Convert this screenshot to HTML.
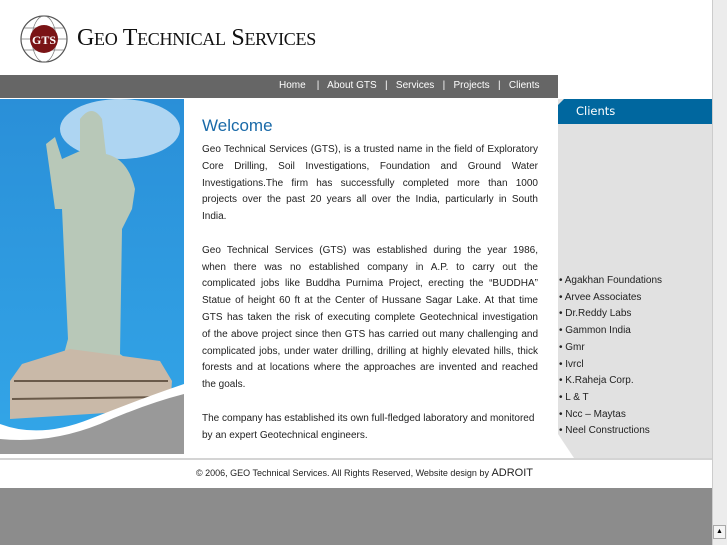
<!DOCTYPE html>
<html><head><meta charset="utf-8"><style>
body{margin:0;width:727px;height:545px;overflow:hidden;background:#fff;font-family:"Liberation Sans",sans-serif;position:relative}
.a{position:absolute}
.t div{white-space:nowrap;text-align:justify;text-align-last:justify;height:16.8px}
.t div.l{text-align-last:left}
.t .g{height:16.8px}
</style></head><body>
<div class="a" style="left:712px;top:0;width:15px;height:545px;background:#ececec;border-left:1px solid #ccc"></div>
<div class="a" style="left:713px;top:525px;width:13px;height:14px;background:#f4f4f4;border:1px solid #aaa;box-sizing:border-box;font-size:7px;text-align:center;line-height:12px">▲</div>
<svg class="a" style="left:19px;top:14px" width="50" height="50" viewBox="0 0 50 50">
<circle cx="25" cy="25" r="23" fill="#fff" stroke="#555" stroke-width="1.2"/>
<ellipse cx="25" cy="25" rx="12" ry="23" fill="none" stroke="#777" stroke-width=".7"/>
<line x1="2" y1="25" x2="48" y2="25" stroke="#777" stroke-width=".7"/>
<line x1="5" y1="14" x2="45" y2="14" stroke="#777" stroke-width=".7"/>
<line x1="5" y1="36" x2="45" y2="36" stroke="#777" stroke-width=".7"/>
<circle cx="25" cy="25" r="14" fill="#7a1416"/>
<text x="25" y="30" font-size="12" font-family="Liberation Serif" fill="#fff" text-anchor="middle" font-weight="bold">GTS</text>
</svg>
<div class="a" style="left:77px;top:25px;font-family:'Liberation Serif',serif;font-size:24px;color:#111;letter-spacing:-0.3px;white-space:nowrap">G<span style="font-size:18px">EO</span> T<span style="font-size:18px">ECHNICAL</span> S<span style="font-size:18px">ERVICES</span></div>
<div class="a" style="left:0;top:75px;width:558px;height:23px;background:#666"></div>
<div class="a" style="left:279px;top:80px;color:#fff;font-size:10px;white-space:nowrap">Home&nbsp;&nbsp;&nbsp; |&nbsp;&nbsp; About GTS&nbsp;&nbsp; |&nbsp;&nbsp; Services&nbsp;&nbsp; |&nbsp;&nbsp; Projects&nbsp;&nbsp; |&nbsp;&nbsp; Clients</div>
<svg class="a" style="left:0;top:99px" width="184" height="355">
<defs><linearGradient id="s" x1="0" y1="0" x2="0" y2="1"><stop offset="0" stop-color="#2a8fd8"/><stop offset="1" stop-color="#33a6e8"/></linearGradient></defs>
<rect width="184" height="355" fill="url(#s)"/>
<ellipse cx="120" cy="30" rx="60" ry="30" fill="#cfe6f7" opacity=".8"/>
<path d="M80 20 Q92 4 102 20 L106 55 Q128 60 135 90 L132 110 L122 130 L120 255 L130 262 L62 262 L68 240 L62 110 L55 110 L46 45 L55 38 L62 60 L80 52 Z" fill="#b8c8b8"/>
<path d="M70 250 L160 262 L172 282 L170 310 L10 320 L10 282 L22 265 Z" fill="#c9b9a8"/>
<path d="M14 282 L168 282 M12 300 L168 298" stroke="#6a5a4a" stroke-width="2"/>
<path d="M0 325 Q40 340 90 320 Q140 300 184 285 L184 355 L0 355 Z" fill="#fff"/>
<path d="M0 340 Q50 345 100 325 Q145 305 184 295 L184 355 L0 355 Z" fill="#999"/>
</svg>
<div class="a" style="left:202px;top:116px;color:#1a6aa8;font-size:17px">Welcome</div>
<div class="a t" style="left:202px;top:142px;width:336px;font-size:10px;line-height:16.8px;color:#222">
<div>Geo Technical Services (GTS), is a trusted name in the field of Exploratory</div>
<div>Core Drilling, Soil Investigations, Foundation and Ground Water</div>
<div>Investigations.The firm has successfully completed more than 1000</div>
<div>projects over the past 20 years all over the India, particularly in South</div>
<div class="l">India.</div>
<div class="g"></div>
<div>Geo Technical Services (GTS) was established during the year 1986,</div>
<div>when there was no established company in A.P. to carry out the</div>
<div>complicated jobs like Buddha Purnima Project, erecting the “BUDDHA”</div>
<div>Statue of height 60 ft at the Center of Hussane Sagar Lake. At that time</div>
<div>GTS has taken the risk of executing complete Geotechnical investigation</div>
<div>of the above project since then GTS has carried out many challenging and</div>
<div>complicated jobs, under water drilling, drilling at highly elevated hills, thick</div>
<div>forests and at locations where the approaches are invented and reached</div>
<div class="l">the goals.</div>
<div class="g"></div>
<div class="l">The company has established its own full-fledged laboratory and monitored</div>
<div class="l">by an expert Geotechnical engineers.</div>
</div>
<div class="a" style="left:558px;top:99px;width:154px;height:359px;background:#e1e1e1;clip-path:polygon(0 0,100% 0,100% 100%,16px 100%,0 335px)"></div>
<div class="a" style="left:558px;top:99px;width:154px;height:25px;background:#00679f;clip-path:polygon(6px 0,100% 0,100% 100%,0 100%,0 6px)"></div>
<div class="a" style="left:576px;top:104px;color:#fff;font-family:'DejaVu Sans',sans-serif;font-size:11.5px">Clients</div>
<div class="a" style="left:559px;top:273px;font-size:10px;line-height:16.7px;color:#222;white-space:nowrap">• Agakhan Foundations<br>• Arvee Associates<br>• Dr.Reddy Labs<br>• Gammon India<br>• Gmr<br>• Ivrcl<br>• K.Raheja Corp.<br>• L &amp; T<br>• Ncc – Maytas<br>• Neel Constructions</div>
<div class="a" style="left:0;top:458px;width:712px;height:2px;background:#d4d4d4"></div>
<div class="a" style="left:196px;top:467px;font-size:9px;color:#222;white-space:nowrap">© 2006, GEO Technical Services. All Rights Reserved, Website design by <span style="font-size:11px">ADROIT</span></div>
<div class="a" style="left:0;top:488px;width:712px;height:57px;background:#8c8c8c"></div>
</body></html>
